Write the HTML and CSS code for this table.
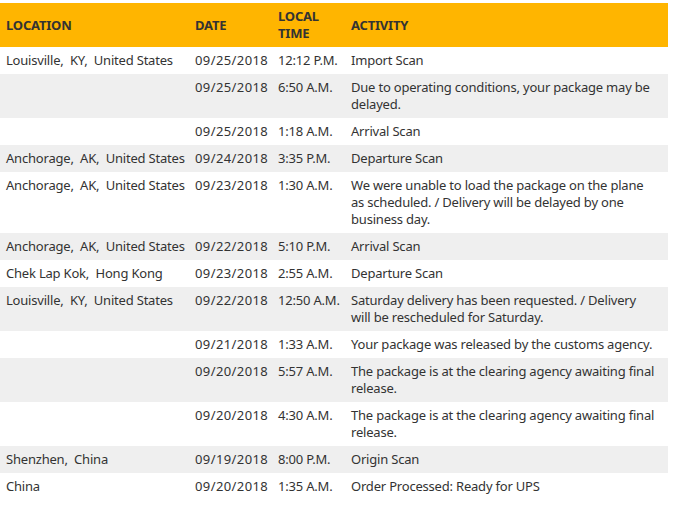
FILE: index.html
```html
<!DOCTYPE html>
<html lang="en">
<head>
  <meta charset="UTF-8" />
  <meta name="viewport" content="width=device-width, initial-scale=1.0"/>
  <title>Shipment Progress</title>
  <link rel="stylesheet" href="styles.css">
</head>
<body>
  <table class="progress">
    <colgroup>
      <col class="col-loc">
      <col class="col-date">
      <col class="col-time">
      <col class="col-act">
    </colgroup>
    <thead>
      <tr>
        <th>Location</th>
        <th>Date</th>
        <th>Local<br>Time</th>
        <th>Activity</th>
      </tr>
    </thead>
    <tbody>
      <tr>
        <td>Louisville,&nbsp; KY,&nbsp; United States</td>
        <td class="date">09/25/2018</td>
        <td>12:12 P.M.</td>
        <td class="act">Import Scan</td>
      </tr>
      <tr>
        <td></td>
        <td class="date">09/25/2018</td>
        <td>6:50 A.M.</td>
        <td class="act">Due to operating conditions, your package may be delayed.</td>
      </tr>
      <tr>
        <td></td>
        <td class="date">09/25/2018</td>
        <td>1:18 A.M.</td>
        <td class="act">Arrival Scan</td>
      </tr>
      <tr>
        <td>Anchorage,&nbsp; AK,&nbsp; United States</td>
        <td class="date">09/24/2018</td>
        <td>3:35 P.M.</td>
        <td class="act">Departure Scan</td>
      </tr>
      <tr>
        <td>Anchorage,&nbsp; AK,&nbsp; United States</td>
        <td class="date">09/23/2018</td>
        <td>1:30 A.M.</td>
        <td class="act">We were unable to load the package on the plane as scheduled. / Delivery will be delayed by one business day.</td>
      </tr>
      <tr>
        <td>Anchorage,&nbsp; AK,&nbsp; United States</td>
        <td class="date">09/22/2018</td>
        <td>5:10 P.M.</td>
        <td class="act">Arrival Scan</td>
      </tr>
      <tr>
        <td>Chek Lap Kok,&nbsp; Hong Kong</td>
        <td class="date">09/23/2018</td>
        <td>2:55 A.M.</td>
        <td class="act">Departure Scan</td>
      </tr>
      <tr>
        <td>Louisville,&nbsp; KY,&nbsp; United States</td>
        <td class="date">09/22/2018</td>
        <td>12:50 A.M.</td>
        <td class="act">Saturday delivery has been requested. / Delivery will be rescheduled for Saturday.</td>
      </tr>
      <tr>
        <td></td>
        <td class="date">09/21/2018</td>
        <td>1:33 A.M.</td>
        <td class="act">Your package was released by the customs agency.</td>
      </tr>
      <tr>
        <td></td>
        <td class="date">09/20/2018</td>
        <td>5:57 A.M.</td>
        <td class="act">The package is at the clearing agency awaiting final release.</td>
      </tr>
      <tr>
        <td></td>
        <td class="date">09/20/2018</td>
        <td>4:30 A.M.</td>
        <td class="act">The package is at the clearing agency awaiting final release.</td>
      </tr>
      <tr>
        <td>Shenzhen,&nbsp; China</td>
        <td class="date">09/19/2018</td>
        <td>8:00 P.M.</td>
        <td class="act">Origin Scan</td>
      </tr>
      <tr>
        <td>China</td>
        <td class="date">09/20/2018</td>
        <td>1:35 A.M.</td>
        <td class="act">Order Processed: Ready for UPS</td>
      </tr>
    </tbody>
  </table>
</body>
</html>
```

FILE: styles.css
```css
body {
  font-family: "Noto Sans", Arial, sans-serif;
  font-size: 13px;
  letter-spacing: -0.2px;
  color: #333;
  background: #fff;
  margin: 0;
  padding: 3px 0 0 0;
}
.progress {
  width: 668px;
  border-collapse: collapse;
  table-layout: fixed;
}
.col-loc { width: 189px; }
.col-date { width: 83px; }
.col-time { width: 73px; }
.col-act { width: 323px; }
th, td {
  text-align: left;
  vertical-align: top;
  line-height: 17px;
  padding: 5px 2px 5px 6px;
}
th {
  background: #ffb500;
  font-weight: bold;
  text-transform: uppercase;
  vertical-align: middle;
  color: #333;
}
tbody tr:nth-child(even) td {
  background: #efefef;
}
td:nth-child(1), td:nth-child(2), td:nth-child(3) {
  white-space: nowrap;
}
td.date {
  letter-spacing: 0.4px;
}
td.act {
  padding-right: 11px;
}
```
